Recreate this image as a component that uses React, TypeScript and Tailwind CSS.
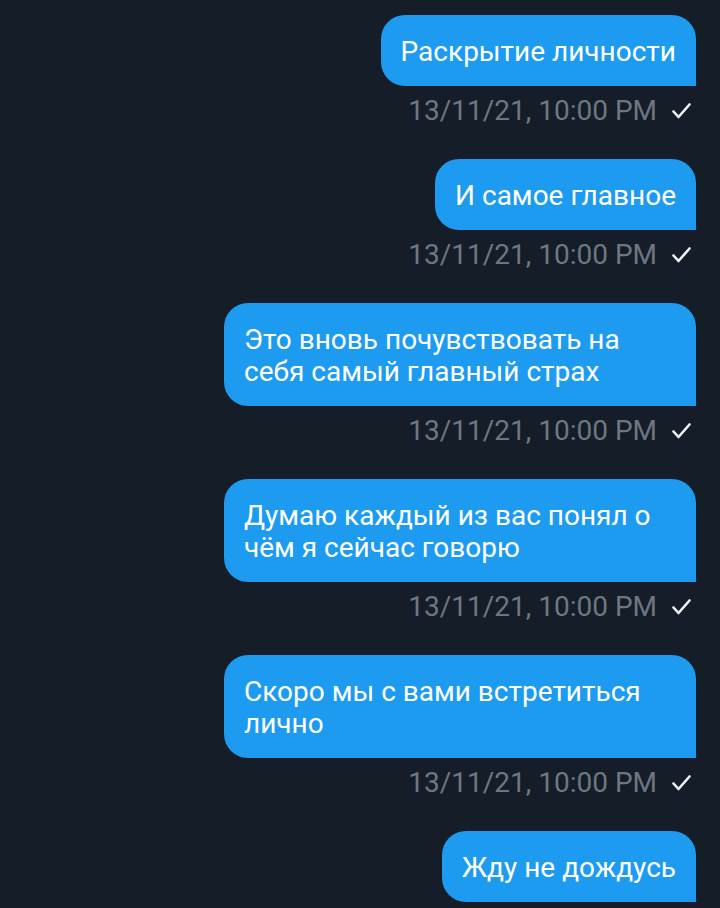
const messages = [
  'Раскрытие личности',
  'И самое главное',
  'Это вновь почувствовать на себя самый главный страх',
  'Думаю каждый из вас понял о чём я сейчас говорю',
  'Скоро мы с вами встретиться лично',
  'Жду не дождусь',
]

function CheckIcon() {
  return (
    <svg viewBox="0 0 19 16" className="h-4 w-[19px]" fill="none" stroke="#f1f3f5" strokeWidth="2.6" strokeLinecap="round" strokeLinejoin="round" aria-hidden="true">
      <path d="M1.5 8.5l5 5.5L17.5 1.5" />
    </svg>
  )
}

function Message({ text, last }: { text: string; last: boolean }) {
  return (
    <div className="flex flex-col items-end">
      <div className="w-fit max-w-[472px] rounded-[24px] rounded-br-none bg-[#1d9bf0] px-5 pb-[18px] pt-[21px] text-[28px] leading-8 text-white">
        {text}
      </div>
      {!last ? (
        <div className="mr-[5px] mt-[12px] flex items-center gap-[15px] text-[28px] leading-[26px] text-[#6e7781]">
          <span>13/11/21, 10:00 PM</span>
          <CheckIcon />
        </div>
      ) : null}
    </div>
  )
}

export default function App() {
  return (
    <div className="h-[908px] overflow-hidden bg-[#151d28] pr-6 pt-[15px]" style={{ fontFamily: 'Roboto, "Noto Sans", sans-serif' }}>
      <div className="flex flex-col gap-[35px]">
        {messages.map((m, i) => (
          <Message key={m} text={m} last={i === messages.length - 1} />
        ))}
      </div>
    </div>
  )
}
